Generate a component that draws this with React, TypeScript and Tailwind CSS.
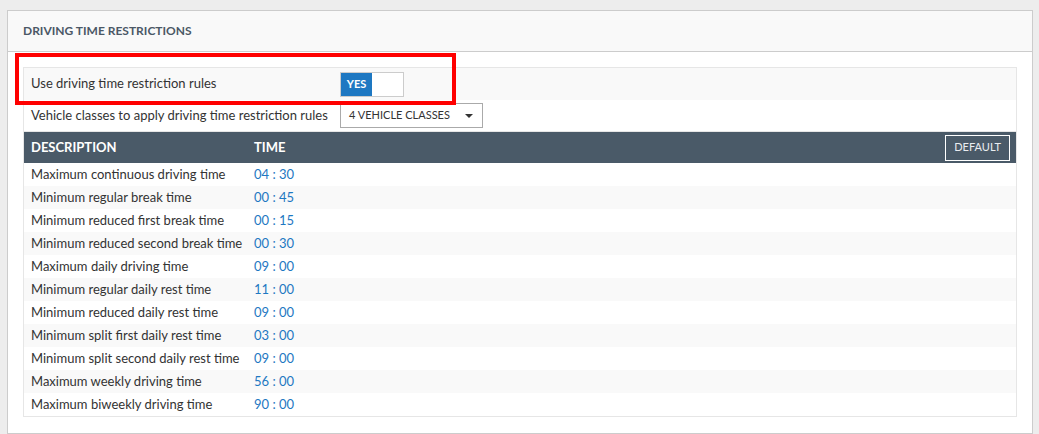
const rows: [string, string][] = [
  ['Maximum continuous driving time', '04 : 30'],
  ['Minimum regular break time', '00 : 45'],
  ['Minimum reduced first break time', '00 : 15'],
  ['Minimum reduced second break time', '00 : 30'],
  ['Maximum daily driving time', '09 : 00'],
  ['Minimum regular daily rest time', '11 : 00'],
  ['Minimum reduced daily rest time', '09 : 00'],
  ['Minimum split first daily rest time', '03 : 00'],
  ['Minimum split second daily rest time', '09 : 00'],
  ['Maximum weekly driving time', '56 : 00'],
  ['Maximum biweekly driving time', '90 : 00'],
];

const App: React.FC = () => {
  return (
    <div className="w-[1039px] h-[434px] bg-[#ededed] pt-[10px] pl-[7px] pr-[6px] font-['Lato',sans-serif] text-[#333]">
      <div className="relative bg-white border border-[#cccccc] h-[424px]">
        <div className="h-[41px] bg-[#f9f9f9] border-b border-[#cccccc] flex items-center pl-[15px]">
          <span className="text-[12px] font-bold text-[#4b5866] uppercase">Driving time restrictions</span>
        </div>

        <div className="mx-[15px] mt-[15px] border border-[#e6e6e6]">
          <div className="h-[32px] bg-[#f9f9f9] flex items-center pl-[7px]">
            <span className="w-[309px] text-[13px]">Use driving time restriction rules</span>
            <div className="w-[64px] h-[25px] border border-[#cccccc] flex bg-white">
              <div className="w-[31px] bg-[#1e78c2] text-white text-[11px] font-bold flex items-center justify-center">YES</div>
            </div>
          </div>

          <div className="h-[32px] bg-white flex items-center pl-[7px] border-b border-[#e6e6e6]">
            <span className="w-[309px] text-[13px]">Vehicle classes to apply driving time restriction rules</span>
            <div className="w-[143px] h-[25px] border border-[#aaaaaa] flex items-center justify-between pl-[8px] pr-[9px]">
              <span className="text-[11px]">4 VEHICLE CLASSES</span>
              <svg width="8" height="4" viewBox="0 0 8 4"><path d="M0 0h8L4 4z" fill="#333" /></svg>
            </div>
          </div>

          <div className="h-[31px] bg-[#4a5a68] flex items-center pl-[7px] pr-[6px] text-white">
            <span className="w-[223px] text-[13px] font-bold">DESCRIPTION</span>
            <span className="flex-1 text-[13px] font-bold">TIME</span>
            <button className="h-[26px] px-[8px] border border-white text-[11px] text-[#e9edf0]">DEFAULT</button>
          </div>

          {rows.map(([label, time], i) => (
            <div
              key={label}
              className={`h-[23px] flex items-center pl-[7px] text-[13px] ${i % 2 === 1 ? 'bg-[#f9f9f9]' : 'bg-white'}`}
            >
              <span className="w-[223px]">{label}</span>
              <span className="text-[#1e78c2]">{time}</span>
            </div>
          ))}
        </div>

        <div className="absolute left-[7px] top-[42px] w-[441px] h-[52px] border-4 border-[#ff0000] pointer-events-none" />
      </div>
    </div>
  );
};

export default App;
